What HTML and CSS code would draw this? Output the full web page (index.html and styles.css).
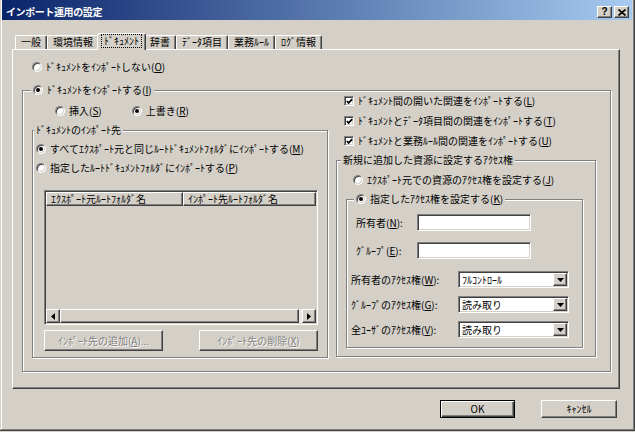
FILE: index.html
```html
<!DOCTYPE html>
<html lang="ja">
<head>
<meta charset="utf-8">
<title>インポート運用の設定</title>
<link rel="stylesheet" href="styles.css">
</head>
<body>
<div class="window">
  <div class="titlebar">
    <span class="title">インポート運用の設定</span>
    <div class="tb-btns">
      <span class="tb-btn tb-help">?</span>
      <span class="tb-btn"><svg width="8" height="7" viewBox="0 0 8 7"><path d="M0.5 0.5 L7.5 6.5 M7.5 0.5 L0.5 6.5" stroke="#000" stroke-width="1.6"/></svg></span>
    </div>
  </div>
  <div class="dialog">
    <div class="tabs">
      <span class="tab">一般</span>
      <span class="tab">環境情報</span>
      <span class="tab active"><span class="focus">ﾄﾞｷｭﾒﾝﾄ</span></span>
      <span class="tab">辞書</span>
      <span class="tab">ﾃﾞｰﾀ項目</span>
      <span class="tab">業務ﾙｰﾙ</span>
      <span class="tab">ﾛｸﾞ情報</span>
    </div>
    <div class="panel">
      <label class="opt opt-none"><span class="radio"></span>ﾄﾞｷｭﾒﾝﾄをｲﾝﾎﾟｰﾄしない(<u>O</u>)</label>
      <fieldset class="grp grp-import">
        <legend class="lg lg-import"><span class="opt"><span class="radio on"></span>ﾄﾞｷｭﾒﾝﾄをｲﾝﾎﾟｰﾄする(<u>I</u>)</span></legend>
        <div class="import-cols">
          <div class="col-left">
            <div class="mode-row">
              <label class="opt"><span class="radio"></span>挿入(<u>S</u>)</label>
              <label class="opt"><span class="radio on"></span>上書き(<u>R</u>)</label>
            </div>
            <fieldset class="grp grp-dest">
              <legend class="lg lg-dest">ﾄﾞｷｭﾒﾝﾄのｲﾝﾎﾟｰﾄ先</legend>
              <div class="dest-body">
                <label class="opt dest-opt"><span class="radio on"></span>すべてｴｸｽﾎﾟｰﾄ元と同じﾙｰﾄﾄﾞｷｭﾒﾝﾄﾌｫﾙﾀﾞにｲﾝﾎﾟｰﾄする(<u>M</u>)</label>
                <label class="opt dest-opt dest-opt2"><span class="radio"></span>指定したﾙｰﾄﾄﾞｷｭﾒﾝﾄﾌｫﾙﾀﾞにｲﾝﾎﾟｰﾄする(<u>P</u>)</label>
                <div class="list">
                  <div class="list-head">
                    <span class="hcell hcell-1">ｴｸｽﾎﾟｰﾄ元ﾙｰﾄﾌｫﾙﾀﾞ名</span>
                    <span class="hcell hcell-2">ｲﾝﾎﾟｰﾄ先ﾙｰﾄﾌｫﾙﾀﾞ名</span>
                  </div>
                  <div class="list-body"></div>
                  <div class="hscroll">
                    <span class="sb-btn"><svg width="4" height="7" viewBox="0 0 4 7"><path d="M4 0 L0 3.5 L4 7 Z" fill="#000"/></svg></span>
                    <span class="sb-thumb"></span>
                    <span class="sb-track"></span>
                    <span class="sb-btn"><svg width="4" height="7" viewBox="0 0 4 7"><path d="M0 0 L4 3.5 L0 7 Z" fill="#000"/></svg></span>
                  </div>
                </div>
                <div class="dest-btns">
                  <button class="btn btn-wide" disabled>ｲﾝﾎﾟｰﾄ先の追加(<u>A</u>)...</button>
                  <button class="btn btn-wide" disabled>ｲﾝﾎﾟｰﾄ先の削除(<u>X</u>)</button>
                </div>
              </div>
            </fieldset>
          </div>
          <div class="col-right">
            <div class="checks">
              <label class="opt"><span class="chk"><svg width="7" height="7" viewBox="0 0 7 7"><path d="M0.8 3 L2.6 4.9 L6.2 1.2" stroke="#000" stroke-width="1.7" fill="none"/></svg></span>ﾄﾞｷｭﾒﾝﾄ間の開いた関連をｲﾝﾎﾟｰﾄする(<u>L</u>)</label>
              <label class="opt"><span class="chk"><svg width="7" height="7" viewBox="0 0 7 7"><path d="M0.8 3 L2.6 4.9 L6.2 1.2" stroke="#000" stroke-width="1.7" fill="none"/></svg></span>ﾄﾞｷｭﾒﾝﾄとﾃﾞｰﾀ項目間の関連をｲﾝﾎﾟｰﾄする(<u>T</u>)</label>
              <label class="opt"><span class="chk"><svg width="7" height="7" viewBox="0 0 7 7"><path d="M0.8 3 L2.6 4.9 L6.2 1.2" stroke="#000" stroke-width="1.7" fill="none"/></svg></span>ﾄﾞｷｭﾒﾝﾄと業務ﾙｰﾙ間の関連をｲﾝﾎﾟｰﾄする(<u>U</u>)</label>
            </div>
            <fieldset class="grp grp-acl">
              <legend class="lg lg-acl">新規に追加した資源に設定するｱｸｾｽ権</legend>
              <div class="acl-body">
                <label class="opt acl-opt"><span class="radio"></span>ｴｸｽﾎﾟｰﾄ元での資源のｱｸｾｽ権を設定する(<u>J</u>)</label>
                <fieldset class="grp grp-spec">
                  <legend class="lg lg-spec"><span class="opt"><span class="radio on"></span>指定したｱｸｾｽ権を設定する(<u>K</u>)</span></legend>
                  <div class="owner-rows">
                    <span class="flabel">所有者(<u>N</u>):</span>
                    <span class="textbox"></span>
                    <span class="flabel">ｸﾞﾙｰﾌﾟ(<u>E</u>):</span>
                    <span class="textbox"></span>
                  </div>
                  <div class="perm-rows">
                    <span class="flabel">所有者のｱｸｾｽ権(<u>W</u>):</span>
                    <span class="combo"><span class="combo-val">ﾌﾙｺﾝﾄﾛｰﾙ</span><span class="combo-btn"><svg width="7" height="4" viewBox="0 0 7 4"><path d="M0 0 L7 0 L3.5 4 Z" fill="#000"/></svg></span></span>
                    <span class="flabel">ｸﾞﾙｰﾌﾟのｱｸｾｽ権(<u>G</u>):</span>
                    <span class="combo"><span class="combo-val">読み取り</span><span class="combo-btn"><svg width="7" height="4" viewBox="0 0 7 4"><path d="M0 0 L7 0 L3.5 4 Z" fill="#000"/></svg></span></span>
                    <span class="flabel">全ﾕｰｻﾞのｱｸｾｽ権(<u>V</u>):</span>
                    <span class="combo"><span class="combo-val">読み取り</span><span class="combo-btn"><svg width="7" height="4" viewBox="0 0 7 4"><path d="M0 0 L7 0 L3.5 4 Z" fill="#000"/></svg></span></span>
                  </div>
                </fieldset>
              </div>
            </fieldset>
          </div>
        </div>
      </fieldset>
    </div>
    <div class="footer">
      <button class="btn btn-default">OK</button>
      <button class="btn btn-cancel">ｷｬﾝｾﾙ</button>
    </div>
  </div>
</div>
</body>
</html>
```
FILE: styles.css
```css
* { box-sizing: border-box; }
html, body { margin: 0; padding: 0; }
body {
  width: 635px;
  height: 432px;
  overflow: hidden;
  background: #d4d0c8;
  font-family: "Noto Sans CJK JP", "Noto Sans", sans-serif;
  font-size: 10px;
  line-height: 14px;
  color: #000;
}
u { text-decoration: underline; text-underline-offset: 1px; }

.window {
  width: 635px;
  height: 431px;
  padding: 0 3px 3px 2px;
  box-shadow: inset -1px -1px #404040, inset 1px 0 #d4d0c8, inset -2px -2px #808080, inset 2px 0 #fff;
}

/* title bar */
.titlebar {
  height: 20px;
  display: flex;
  align-items: center;
  justify-content: space-between;
  padding: 4px 3px 0 4px;
  background: linear-gradient(to right, #0a246a, #a6caf0);
}
.title { color: #fff; font-weight: bold; letter-spacing: -0.4px; }
.tb-btns { display: flex; gap: 2px; }
.tb-btn {
  width: 15px;
  height: 12px;
  display: flex;
  align-items: center;
  justify-content: center;
  background: #d4d0c8;
  border: 1px solid;
  border-color: #fff #404040 #404040 #fff;
  box-shadow: inset -1px -1px #808080;
}
.tb-help { font-family: "Liberation Sans", sans-serif; font-weight: bold; font-size: 10px; line-height: 10px; }

/* dialog */
.dialog { padding: 13px 0 0 10px; }

.tabs {
  position: relative;
  z-index: 1;
  display: flex;
  align-items: flex-end;
  height: 16px;
  padding-left: 3px;
}
.tab {
  height: 14px;
  padding: 0 5px;
  line-height: 12px;
  white-space: nowrap;
  border: 1px solid;
  border-bottom: 0;
  border-color: #fff #404040 transparent #fff;
  border-radius: 2px 2px 0 0;
  box-shadow: inset -1px 0 #808080;
}
.tab.active {
  height: 17px;
  margin: 0 -2px -1px;
  padding: 1px 4px 0;
  background: #d4d0c8;
  position: relative;
  z-index: 2;
}
.focus { display: inline-block; outline: 1px dotted #000; padding: 0 2px; line-height: 12px; }

.panel {
  width: 608px;
  height: 340px;
  border: 1px solid;
  border-color: #fff #404040 #404040 #fff;
  box-shadow: inset -1px -1px #808080;
  padding: 10px 0 0 9px;
}

/* controls */
.opt {
  display: flex;
  align-items: center;
  height: 14px;
  white-space: nowrap;
}
.radio {
  flex-shrink: 0;
  width: 10px;
  height: 10px;
  margin-right: 4px;
  border-radius: 50%;
  background: #fff;
  border: 1px solid;
  border-color: #808080 #fff #fff #808080;
  box-shadow: inset 1px 1px #404040, inset -1px -1px #d4d0c8;
  display: flex;
  align-items: center;
  justify-content: center;
}
.radio.on::after {
  content: "";
  width: 4px;
  height: 4px;
  border-radius: 50%;
  background: #000;
}
.chk {
  flex-shrink: 0;
  width: 10px;
  height: 10px;
  margin-right: 4px;
  background: #fff;
  border: 1px solid;
  border-color: #808080 #fff #fff #808080;
  box-shadow: inset 1px 1px #404040, inset -1px -1px #d4d0c8;
  display: flex;
  align-items: center;
  justify-content: center;
}
.opt-none { margin-left: 10px; }

.grp {
  margin: 0;
  padding: 0;
  min-inline-size: 0;
  border: 1px solid #808080;
  box-shadow: inset 1px 1px #fff, 1px 1px #fff;
}
.lg {
  padding: 0 2px;
  height: 14px;
  line-height: 14px;
  background: #d4d0c8;
  white-space: nowrap;
}

.grp-import { width: 589px; margin-top: 9px; }
.lg-import { margin-left: 8px; }
.import-cols {
  display: grid;
  grid-template-columns: 296px 260px;
  column-gap: 8px;
  align-items: start;
  margin-top: -3px;
  padding: 0 0 13px 9px;
}

.mode-row { display: flex; gap: 30px; margin: 10px 0 0 23px; }

.grp-dest { width: 296px; margin-top: 5px; }
.lg-dest { margin-left: 1px; }
.dest-body { padding: 5px 0 6px 3px; }
.dest-opt2 { margin-top: 5px; }

.list {
  width: 274px;
  height: 135px;
  margin: 15px 0 0 8px;
  display: flex;
  flex-direction: column;
  border: 1px solid;
  border-color: #808080 #fff #fff #808080;
  box-shadow: inset 1px 1px #404040, inset -1px -1px #d4d0c8;
  padding: 1px;
}
.list-head { display: flex; height: 14px; }
.hcell {
  height: 14px;
  line-height: 11px;
  padding-left: 4px;
  white-space: nowrap;
  overflow: hidden;
  border: 1px solid;
  border-color: #fff #404040 #404040 #fff;
  box-shadow: inset -1px -1px #808080;
}
.hcell-1 { width: 137px; }
.hcell-2 { flex: 1; }
.list-body { flex: 1; }
.hscroll { display: flex; height: 14px; }
.sb-btn, .sb-thumb {
  border: 1px solid;
  border-color: #fff #404040 #404040 #fff;
  box-shadow: inset -1px -1px #808080;
  background: #d4d0c8;
}
.sb-btn { width: 14px; display: flex; align-items: center; justify-content: center; }
.sb-thumb { flex: 1; }
.sb-track { width: 3px; background: #ebe9e5; }

.dest-btns {
  display: flex;
  justify-content: space-between;
  width: 274px;
  margin: 5px 0 0 8px;
}
.btn {
  font-family: inherit;
  font-size: 10px;
  line-height: 14px;
  color: #000;
  background: #d4d0c8;
  padding: 0;
  margin: 0;
  border: 1px solid;
  border-color: #fff #404040 #404040 #fff;
  box-shadow: inset -1px -1px #808080;
  white-space: nowrap;
}
.btn-wide { width: 119px; height: 21px; }
.btn:disabled { color: #808080; text-shadow: 1px 1px 0 #fff; }

.checks { display: flex; flex-direction: column; gap: 6px; padding-left: 8px; }
.grp-acl { width: 260px; margin-top: 5px; }
.lg-acl { margin-left: 4px; }
.acl-body { padding: 6px 0 8px 9px; }
.acl-opt { margin-left: 7px; }
.grp-spec { width: 237px; margin-top: 5px; }
.lg-spec { margin-left: 7px; }

.owner-rows {
  display: grid;
  grid-template-columns: 61px 114px;
  row-gap: 11px;
  align-items: center;
  margin-top: 8px;
  padding-left: 9px;
}
.perm-rows {
  display: grid;
  grid-template-columns: 107px 111px;
  row-gap: 8px;
  align-items: center;
  margin-top: 12px;
  padding: 0 0 9px 4px;
}
.flabel { white-space: nowrap; }
.textbox, .combo {
  height: 17px;
  background: #fff;
  border: 1px solid;
  border-color: #808080 #fff #fff #808080;
  box-shadow: inset 1px 1px #404040, inset -1px -1px #d4d0c8;
}
.combo { display: flex; align-items: center; padding: 1px 1px 1px 3px; }
.combo-val { flex: 1; line-height: 13px; }
.combo-btn {
  width: 14px;
  height: 13px;
  display: flex;
  align-items: center;
  justify-content: center;
  background: #d4d0c8;
  border: 1px solid;
  border-color: #fff #404040 #404040 #fff;
  box-shadow: inset -1px -1px #808080;
}

.footer {
  display: flex;
  justify-content: flex-end;
  gap: 26px;
  width: 608px;
  margin-top: 11px;
  padding-right: 3px;
}
.btn-default, .btn-cancel { height: 18px; }
.btn-default {
  width: 75px;
  border-color: #000;
  box-shadow: inset 1px 1px #fff, inset -1px -1px #404040, inset -2px -2px #808080;
}
.btn-cancel { width: 76px; }
```
